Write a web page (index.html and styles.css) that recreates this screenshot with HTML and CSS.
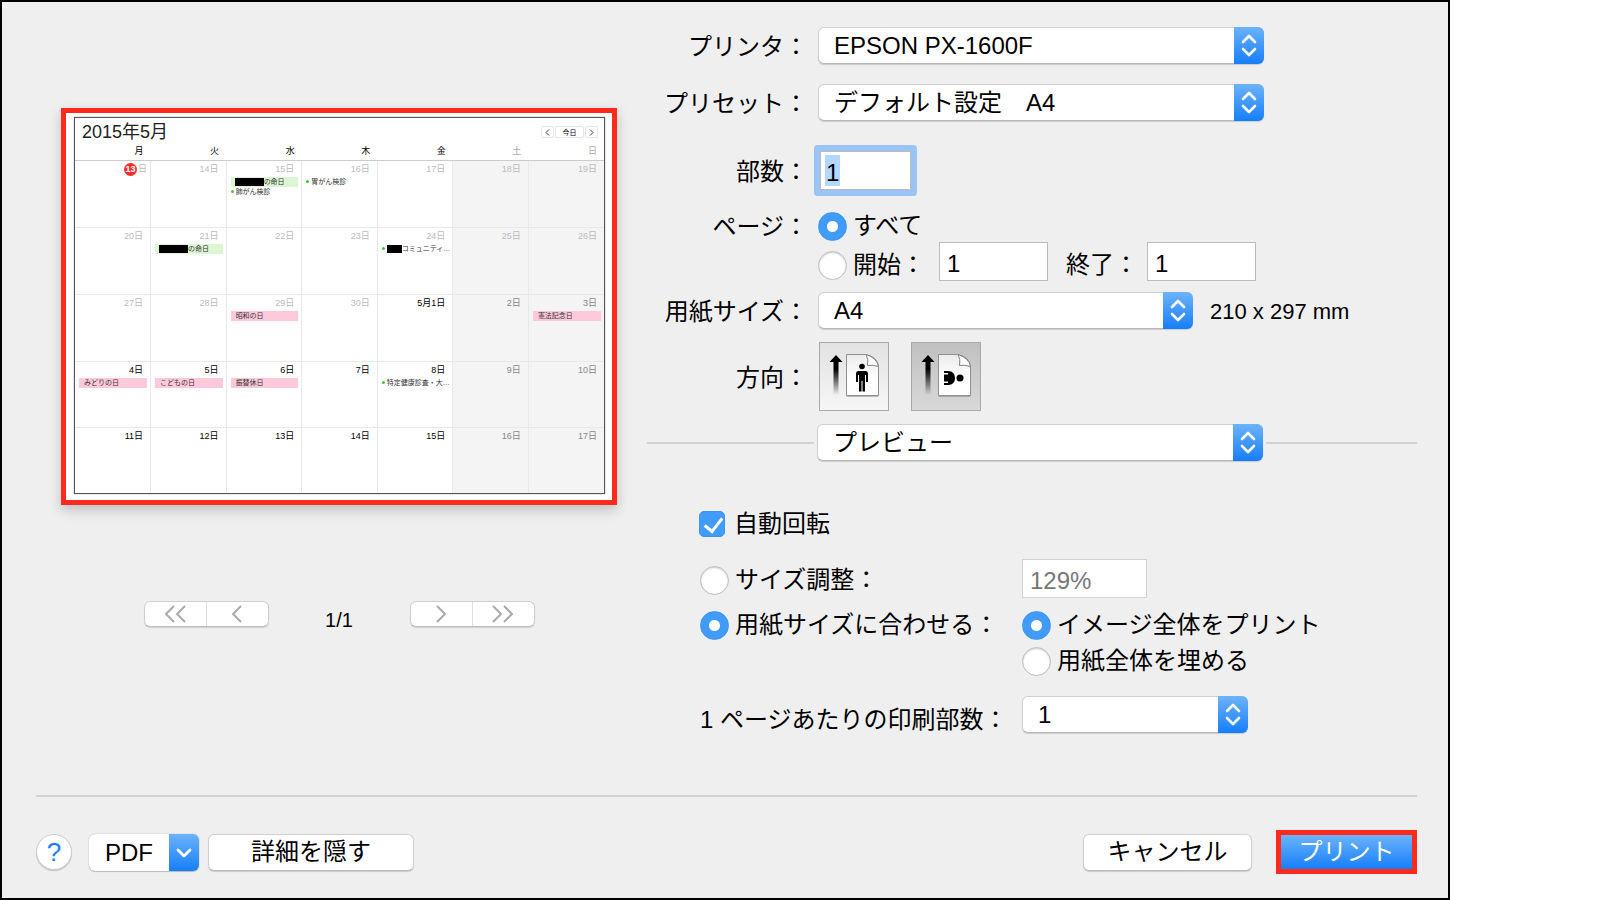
FILE: index.html
```html
<!DOCTYPE html>
<html lang="ja">
<head>
<meta charset="utf-8">
<title>プリント</title>
<link rel="stylesheet" href="styles.css">
</head>
<body>
<svg class="defs" aria-hidden="true">
  <defs>
    <linearGradient id="shaft" x1="0" y1="0" x2="0" y2="1"><stop offset="0.35" stop-color="#000"/><stop offset="1" stop-color="#000" stop-opacity="0"/></linearGradient>
    <linearGradient id="paper" x1="0" y1="0" x2="0" y2="1"><stop offset="0" stop-color="#ececec"/><stop offset="0.6" stop-color="#fff"/></linearGradient>
    <symbol id="updown" viewBox="0 0 30 37"><path d="M9 15l6-6 6 6M9 22l6 6 6-6" fill="none" stroke="#fff" stroke-width="2.6" stroke-linecap="round" stroke-linejoin="round"/></symbol>
    <symbol id="sheet" viewBox="0 0 68 67">
      <path d="M16 12l6.500 7h-4v33h-5V19h-4z" fill="url(#shaft)"/>
      <path d="M26.500 13.500h19q12 2 13 12v28.500h-32z" fill="#666" opacity="0.400"/>
      <path d="M26.500 11.500h19q12 2 13 12v29h-32z" fill="url(#paper)" stroke="#909090"/>
      <path d="M46 11.500q3 5 1.500 11 5-1 11 1Q57 15 46 11.500z" fill="#fff" stroke="#808080"/>
    </symbol>
  </defs>
</svg>
<main class="dialog">
  <div class="content">
    <section class="preview">
      <div class="page">
        <div class="calendar">
          <header class="cal-head">
            <h1 class="cal-title">2015年5月</h1>
            <div class="cal-nav">
              <button class="cal-btn" aria-label="前の月"><svg width="5" height="7" viewBox="0 0 5 7"><path d="M4 .5L1 3.500l3 3" fill="none" stroke="#333"/></svg></button>
              <button class="cal-btn cal-today">今日</button>
              <button class="cal-btn" aria-label="次の月"><svg width="5" height="7" viewBox="0 0 5 7"><path d="M1 .5l3 3-3 3" fill="none" stroke="#333"/></svg></button>
            </div>
          </header>
          <table class="month">
            <thead><tr><th>月</th><th>火</th><th>水</th><th>木</th><th>金</th><th class="off">土</th><th class="off">日</th></tr></thead>
            <tbody>
              <tr class="past">
                <td><div class="date today"><span class="badge">13</span>日</div></td>
                <td><div class="date">14日</div></td>
                <td><div class="date">15日</div><div class="event green"><span class="mask"></span>の命日</div><div class="event dot">肺がん検診</div></td>
                <td><div class="date">16日</div><div class="event dot">胃がん検診</div></td>
                <td><div class="date">17日</div></td>
                <td><div class="date">18日</div></td>
                <td><div class="date">19日</div></td>
              </tr>
              <tr class="past">
                <td><div class="date">20日</div></td>
                <td><div class="date">21日</div><div class="event green"><span class="mask"></span>の命日</div></td>
                <td><div class="date">22日</div></td>
                <td><div class="date">23日</div></td>
                <td><div class="date">24日</div><div class="event dot"><span class="mask short"></span>コミュニティ…</div></td>
                <td><div class="date">25日</div></td>
                <td><div class="date">26日</div></td>
              </tr>
              <tr>
                <td class="past"><div class="date">27日</div></td>
                <td class="past"><div class="date">28日</div></td>
                <td class="past"><div class="date">29日</div><div class="event pink">昭和の日</div></td>
                <td class="past"><div class="date">30日</div></td>
                <td><div class="date">5月1日</div></td>
                <td><div class="date">2日</div></td>
                <td><div class="date">3日</div><div class="event pink">憲法記念日</div></td>
              </tr>
              <tr>
                <td><div class="date">4日</div><div class="event pink">みどりの日</div></td>
                <td><div class="date">5日</div><div class="event pink">こどもの日</div></td>
                <td><div class="date">6日</div><div class="event pink">振替休日</div></td>
                <td><div class="date">7日</div></td>
                <td><div class="date">8日</div><div class="event dot">特定健康診査・大…</div></td>
                <td><div class="date">9日</div></td>
                <td><div class="date">10日</div></td>
              </tr>
              <tr>
                <td><div class="date">11日</div></td>
                <td><div class="date">12日</div></td>
                <td><div class="date">13日</div></td>
                <td><div class="date">14日</div></td>
                <td><div class="date">15日</div></td>
                <td><div class="date">16日</div></td>
                <td><div class="date">17日</div></td>
              </tr>
            </tbody>
          </table>
        </div>
      </div>
      <nav class="pager">
        <div class="segment">
          <button aria-label="最初のページ"><svg width="22" height="18" viewBox="0 0 22 18"><path d="M10 1L2 9l8 8M21 1l-8 8 8 8"/></svg></button>
          <button aria-label="前のページ"><svg width="12" height="18" viewBox="0 0 12 18"><path d="M10 1L2 9l8 8"/></svg></button>
        </div>
        <span class="count">1/1</span>
        <div class="segment">
          <button aria-label="次のページ"><svg width="12" height="18" viewBox="0 0 12 18"><path d="M2 1l8 8-8 8"/></svg></button>
          <button aria-label="最後のページ"><svg width="22" height="18" viewBox="0 0 22 18"><path d="M1 1l8 8-8 8M12 1l8 8-8 8"/></svg></button>
        </div>
      </nav>
    </section>

    <form class="settings" id="print-form">
      <div class="row">
        <label class="name" for="printer">プリンタ：</label>
        <div class="popup wide"><select id="printer"><option>EPSON PX-1600F</option></select><svg class="cap"><use href="#updown"/></svg></div>
      </div>
      <div class="row preset">
        <label class="name" for="preset">プリセット：</label>
        <div class="popup wide"><select id="preset"><option>デフォルト設定　A4</option></select><svg class="cap"><use href="#updown"/></svg></div>
      </div>
      <div class="row copies">
        <label class="name" for="copies">部数：</label>
        <div class="field focused"><input id="copies" type="text" value="1"></div>
      </div>
      <div class="row pages">
        <span class="name">ページ：</span>
        <label class="choice"><input type="radio" name="pages" checked>すべて</label>
      </div>
      <div class="row range">
        <label class="choice from"><input type="radio" name="pages">開始：</label>
        <input class="field number" type="text" value="1" aria-label="開始ページ">
        <label class="to" for="to">終了：</label>
        <input class="field number" id="to" type="text" value="1">
      </div>
      <div class="row paper">
        <label class="name" for="paper-size">用紙サイズ：</label>
        <div class="popup medium"><select id="paper-size"><option>A4</option></select><svg class="cap"><use href="#updown"/></svg></div>
        <span class="dimensions">210 x 297 mm</span>
      </div>
      <div class="row direction">
        <span class="name">方向：</span>
        <button type="button" class="orient" aria-label="縦"><svg viewBox="0 0 68 67"><use href="#sheet"/><circle cx="42" cy="23.500" r="2.800"/><path d="M38.500 28h7q2.500 0 2.500 3v8h-2v-7h-1v16.500h-2.500V38h-1v10.500H39V32h-1v7h-2v-8q0-3 2.500-3z"/></svg></button>
        <button type="button" class="orient pressed" aria-label="横"><svg viewBox="0 0 68 67"><use href="#sheet"/><circle cx="48" cy="35" r="3.500"/><path d="M32 28h5q6 1 6 7t-6 7h-5v-2h4v-1.500h-4v-7h4V30h-4z"/></svg></button>
      </div>
      <div class="pane-switch">
        <span class="rule"></span>
        <div class="popup pane"><select id="pane" aria-label="設定項目"><option>プレビュー</option></select><svg class="cap"><use href="#updown"/></svg></div>
        <span class="rule"></span>
      </div>

      <div class="options">
        <label class="choice rotate"><input type="checkbox" checked>自動回転</label>
        <label class="choice scale"><input type="radio" name="fit">サイズ調整：</label>
        <input class="field percent" type="text" value="129%" aria-label="サイズ" disabled>
        <label class="choice fit"><input type="radio" name="fit" checked>用紙サイズに合わせる：</label>
        <label class="choice fit"><input type="radio" name="fill" checked>イメージ全体をプリント</label>
        <label class="choice fill"><input type="radio" name="fill">用紙全体を埋める</label>
        <label class="per-page" for="per-page">1 ページあたりの印刷部数：</label>
        <div class="popup small"><select id="per-page"><option>1</option></select><svg class="cap"><use href="#updown"/></svg></div>
      </div>
    </form>
  </div>

  <footer class="actions">
    <button class="help" aria-label="ヘルプ">?</button>
    <button class="pdf"><span class="pdf-text">PDF</span><svg class="pdf-cap" viewBox="0 0 30 36"><path d="M9 15.500l6 6 6-6" fill="none" stroke="#fff" stroke-width="2.800" stroke-linecap="round" stroke-linejoin="round"/></svg></button>
    <button class="push details">詳細を隠す</button>
    <button class="push cancel">キャンセル</button>
    <button class="print" form="print-form" type="button">プリント</button>
  </footer>
</main>
</body>
</html>
```
FILE: styles.css
```css
* {
  box-sizing: border-box;
}

body {
  margin: 0;
  background: #fff;
  color: #000;
  font: 24px/30px "Liberation Sans", "Noto Sans CJK JP", sans-serif;
}

button,
input,
select {
  margin: 0;
  padding: 0;
  font: inherit;
  color: inherit;
}

.defs {
  position: absolute;
  width: 0;
  height: 0;
}

.dialog {
  display: flex;
  flex-direction: column;
  width: calc(100% - 150px);
  min-width: 1400px;
  min-height: 100vh;
  border: 2px solid #000;
  background: #efefef;
}

.content {
  display: flex;
  flex: 1;
  gap: 30px;
  padding: 25px 31px 0 59px;
}

/* Page preview */

.preview {
  flex: 0 0 556px;
  padding-top: 81px;
}

.page {
  padding: 4px 7px 6px 8px;
  border: 5px solid #ff2a1c;
  background: #fff;
  box-shadow: 0 5px 12px rgba(0, 0, 0, 0.2);
}

.calendar {
  border: 1px solid #555;
  box-shadow: 0 0 1px #777;
  font-size: 9px;
  line-height: 11px;
}

.cal-head {
  display: flex;
  justify-content: space-between;
  padding: 4px 6px 0 7px;
}

.cal-title {
  margin: 0;
  font-size: 18px;
  font-weight: 400;
  line-height: 20px;
  color: #222;
}

.cal-nav {
  display: flex;
  gap: 1px;
  padding-top: 4px;
}

.cal-btn {
  display: flex;
  align-items: center;
  justify-content: center;
  width: 13px;
  height: 12px;
  border: 1px solid #e6e6e6;
  border-radius: 2px;
  background: #fff;
  font-size: 7px;
}

.cal-today {
  width: 29px;
}

.month {
  width: 100%;
  border-collapse: collapse;
  table-layout: fixed;
}

.month th {
  height: 18px;
  padding: 1px 7px 0 0;
  border-bottom: 1px solid #ccc;
  font-weight: 400;
  text-align: right;
}

.month th.off {
  color: #aaa;
}

.month td {
  height: 67px;
  padding: 3px 3px 0 4px;
  border: 1px solid #e8e8e8;
  border-left: 0;
  vertical-align: top;
}

.month td:last-child {
  border-right: 0;
}

.month tr:nth-child(n + 4) td {
  height: 66px;
}

.month tr:last-child td {
  border-bottom: 0;
}

.month td:nth-child(n + 6) {
  background: #f4f4f4;
  color: #888;
}

.month .past .date {
  color: #bbb;
}

.date {
  margin-bottom: 2px;
  padding-right: 4px;
  text-align: right;
}

.today {
  padding-right: 0;
}

.badge {
  display: inline-block;
  width: 13px;
  margin: -1px 1px -1px 0;
  border-radius: 7px;
  background: #ff2a2a;
  color: #fff;
  font-weight: 700;
  line-height: 13px;
  text-align: center;
}

.event {
  display: flex;
  align-items: center;
  height: 10px;
  padding-left: 5px;
  color: #333;
  font-size: 7px;
  line-height: 9px;
  white-space: nowrap;
}

.green {
  padding-left: 4px;
  background: #dcf5d3;
}

.pink {
  background: #ffc9dc;
}

.dot {
  gap: 2px;
  padding-left: 0;
}

.dot::before {
  content: "";
  flex: none;
  width: 3px;
  height: 3px;
  border-radius: 2px;
  background: #3c3;
}

.mask {
  flex: none;
  width: 29px;
  height: 8px;
  background: #000;
}

.short {
  width: 15px;
  margin-right: -2px;
}

.pager {
  display: flex;
  align-items: flex-start;
  justify-content: center;
  gap: 52px;
  margin-top: 96px;
}

.segment {
  display: flex;
  width: 125px;
  height: 26px;
  border: 1px solid #cfcfcf;
  border-bottom-color: #bbb;
  border-radius: 6px;
  background: #fff;
  box-shadow: 0 1px 1px rgba(0, 0, 0, 0.12);
}

.segment button {
  display: flex;
  flex: 1;
  align-items: center;
  justify-content: center;
  border: 0;
  background: none;
}

.segment button + button {
  border-left: 1px solid #ddd;
}

.segment path {
  fill: none;
  stroke: #aaa;
  stroke-width: 2;
}

.count {
  width: 37px;
  padding-top: 4px;
  font-size: 20px;
  text-align: center;
}

/* Settings form */

.settings {
  flex: 1;
  min-width: 0;
}

.row {
  display: flex;
  align-items: center;
}

.name {
  width: 161px;
  margin-right: 10px;
  padding-top: 2px;
  text-align: right;
  white-space: nowrap;
}

.popup {
  display: grid;
  height: 37px;
}

.popup select {
  grid-area: 1 / 1;
  width: 100%;
  padding: 0 36px 0 15px;
  border: 1px solid #d0d0d0;
  border-bottom-color: #b8b8b8;
  border-radius: 6px;
  background: #fff;
  box-shadow: 0 1px 1px rgba(0, 0, 0, 0.15);
  appearance: none;
}

.cap {
  grid-area: 1 / 1;
  justify-self: end;
  width: 30px;
  height: 37px;
  border-radius: 0 6px 6px 0;
  background: linear-gradient(#6cb3fa, #167efb);
  pointer-events: none;
}

.wide {
  width: 446px;
}

.medium {
  width: 375px;
}

.preset {
  margin-top: 20px;
}

.field {
  height: 39px;
  border: 1px solid #bbb;
  border-radius: 0;
  background: #fff;
}

input.field {
  padding: 4px 7px 0;
}

.copies {
  margin-top: 30px;
}

.focused {
  width: 91px;
  margin-left: 2px;
  padding: 3px 4px;
  box-shadow: 0 0 0 6px #99c4f3;
  border-radius: 1px;
}

.focused input {
  display: block;
  width: 15px;
  height: 31px;
  padding: 4px 0 0 1px;
  border: 0;
  background: #b3d7ff;
}

.pages {
  margin-top: 20px;
}

.choice {
  display: flex;
  align-items: center;
  gap: 6px;
  white-space: nowrap;
}

.choice input {
  width: 29px;
  height: 29px;
  border: 1px solid #bbb;
  border-radius: 50%;
  background: #fff;
  box-shadow: inset 0 1px 2px rgba(0, 0, 0, 0.2);
  appearance: none;
}

.choice input:checked {
  border-color: #3b94f8;
  background: radial-gradient(circle, #fff 5px, #419bf9 6px);
  box-shadow: none;
}

.range {
  height: 46px;
  padding-left: 171px;
}

.from {
  width: 121px;
}

.number {
  align-self: flex-start;
  width: 109px;
}

.to {
  width: 99px;
  padding-left: 18px;
  white-space: nowrap;
}

.paper {
  margin-top: 4px;
}

.dimensions {
  margin-left: 17px;
  padding-top: 2px;
  font-size: 22px;
}

.direction {
  margin-top: 13px;
}

.direction .name {
  margin-right: 11px;
}

.orient {
  width: 70px;
  height: 69px;
  margin-right: 22px;
  border: 1px solid #aaa;
  background: linear-gradient(#e2e2e2, #f6f6f6);
}

.orient svg {
  display: block;
  width: 68px;
  height: 67px;
}

.pressed {
  background: linear-gradient(#c0c0c0, #d8d8d8);
}

.pane-switch {
  display: flex;
  align-items: center;
  gap: 3px;
  margin-top: 13px;
}

.rule {
  flex: 0 0 167px;
  height: 2px;
  background: #d2d2d2;
}

.rule:last-child {
  flex: 1;
}

.pane {
  width: 446px;
}

.options {
  display: grid;
  grid-template-columns: 322px 1fr;
  align-items: center;
  margin-top: 46px;
  padding-left: 53px;
}

.rotate {
  grid-column: 1 / -1;
  gap: 9px;
  height: 34px;
  margin: 0 0 18px -1px;
}

.rotate input {
  width: 26px;
  height: 26px;
  border-radius: 5px;
}

.rotate input:checked {
  background: #419bf9;
}

.rotate input::before {
  content: "";
  display: block;
  width: 8px;
  height: 15px;
  margin: 2px 0 0 8px;
  border: solid #fff;
  border-width: 0 3px 3px 0;
  transform: rotate(38deg);
}

.scale {
  padding-top: 3px;
}

.percent {
  width: 125px;
  border-color: #d2d2d2;
  color: #777;
}

.fit {
  height: 36px;
  margin-top: 9px;
}

.fill {
  grid-column: 2;
  height: 36px;
}

.per-page {
  padding-top: 26px;
  white-space: nowrap;
}

.small {
  width: 226px;
  margin-top: 15px;
}

/* Footer */

.actions {
  display: flex;
  align-items: center;
  margin: 0 31px 0 34px;
  padding: 33px 0 24px;
  border-top: 2px solid #d2d2d2;
}

.help {
  width: 36px;
  height: 36px;
  border: 1px solid #ccc;
  border-radius: 50%;
  background: #fff;
  box-shadow: 0 1px 1px rgba(0, 0, 0, 0.2);
  color: #167efb;
  font-size: 26px;
}

.pdf {
  display: flex;
  width: 110px;
  height: 37px;
  margin: 0 9px 0 17px;
  overflow: hidden;
  border: 0;
  border-radius: 6px;
  background: #fff;
  box-shadow: 0 0 1px #888, 0 1px 1px rgba(0, 0, 0, 0.2);
}

.pdf-text {
  flex: 1;
  line-height: 37px;
}

.pdf-cap {
  width: 30px;
  height: 37px;
  background: linear-gradient(#6cb3fa, #167efb);
}

.push {
  height: 37px;
  border: 1px solid #d0d0d0;
  border-bottom-color: #b8b8b8;
  border-radius: 6px;
  background: #fff;
  box-shadow: 0 1px 1px rgba(0, 0, 0, 0.15);
}

.details {
  width: 206px;
}

.cancel {
  width: 169px;
  margin-left: auto;
}

.print {
  width: 141px;
  height: 44px;
  margin-left: 24px;
  border: 5px solid #ff2a1c;
  background: linear-gradient(#6cb3fa, #167efb);
  color: #fff;
}
```
